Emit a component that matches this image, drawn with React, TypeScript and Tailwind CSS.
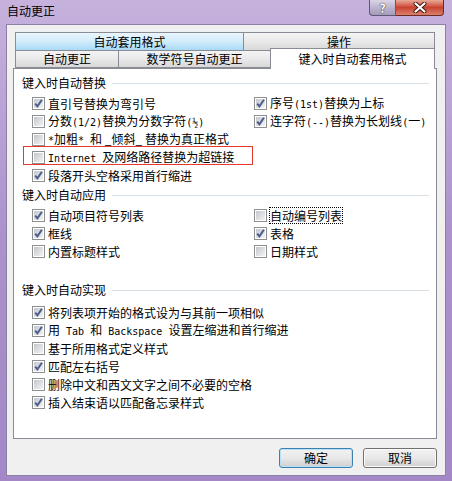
import React from "react";

const cjk = "font-['Noto_Sans_CJK_SC','Noto_Sans',sans-serif]";

// half-width latin runs, SimSun style (6px per char)
function M({ children }: { children: React.ReactNode }) {
  return <span className="whitespace-pre font-['DejaVu_Sans_Mono',monospace] text-[10px]">{children}</span>;
}

function CheckBox({ checked }: { checked?: boolean }) {
  return (
    <span className="relative flex h-[13px] w-[13px] shrink-0 border border-[#8e8f8f] bg-white p-px">
      <span className="block h-full w-full bg-gradient-to-br from-[#c3c7cd] to-[#f3f3f4]" />
      {checked && (
        <svg className="absolute left-0 top-0" width="11" height="11" viewBox="0 0 11 11">
          <path d="M2.2 5.6 L4.4 8.4 L8.9 1.8" fill="none" stroke="#4b5d8e" strokeWidth="2" />
        </svg>
      )}
    </span>
  );
}

function Item({ checked, children, focus }: { checked?: boolean; children: React.ReactNode; focus?: boolean }) {
  return (
    <div className="flex h-[18px] items-center gap-[3px]">
      <CheckBox checked={checked} />
      <span className={`whitespace-nowrap leading-[15px] ${focus ? "outline outline-1 outline-dotted outline-black" : ""}`}>{children}</span>
    </div>
  );
}

function Header({ title }: { title: string }) {
  return (
    <div className="flex h-[18px] items-center gap-[6px] pr-[7px]">
      <span>{title}</span>
      <span className="h-px flex-1 bg-[#d5dfe5]" />
    </div>
  );
}

function Tab({ label, className }: { label: string; className: string }) {
  return (
    <div className={`flex items-center justify-center border border-[#898c95] ${className}`}>
      {label}
    </div>
  );
}

export default function App() {
  return (
    <div className={`flex h-[481px] w-[452px] flex-col bg-gradient-to-b from-[#c6b2dd] via-[#ac91cd] to-[#a387c7] text-[12px] text-black ${cjk}`}>
      {/* title bar */}
      <div className="flex h-[24px] shrink-0 items-start">
        <span className="pl-[7px] pt-[3px] leading-[16px]">自动更正</span>
        <div className="ml-auto mr-[8px] flex">
          <div className="flex h-[16px] w-[27px] items-center justify-center rounded-bl-[4px] border border-t-0 border-[#5f5678] bg-gradient-to-b from-[#dcd5e6] via-[#bdb4cf] to-[#a39bb8] font-bold leading-none text-white [text-shadow:0_0_1px_#333,0_0_1px_#333]">
            ?
          </div>
          <div className="flex h-[16px] w-[48px] items-center justify-center rounded-br-[4px] border border-l-0 border-t-0 border-[#6b2a23] bg-gradient-to-b from-[#e9a897] via-[#c8422f] to-[#d9806c]">
            <svg width="14" height="11" viewBox="0 0 14 11">
              <path d="M2.5 1.5 L11.5 9.5 M11.5 1.5 L2.5 9.5" stroke="#3a1410" strokeWidth="4" strokeLinecap="round" />
              <path d="M2.5 1.5 L11.5 9.5 M11.5 1.5 L2.5 9.5" stroke="#ffffff" strokeWidth="2.2" strokeLinecap="round" />
            </svg>
          </div>
        </div>
      </div>

      {/* client area */}
      <div className="mx-[6px] flex h-[452px] flex-col border border-[#8d80a2] bg-[#f0f0f0] pl-[6px] pt-[7px]">
        <div className="ml-[2px] flex h-[19px] w-[420px]">
          <Tab label="自动套用格式" className="w-[229px] bg-gradient-to-b from-[#eaf6fd] via-[#d2ecfb] to-[#a8daf6]" />
          <Tab label="操作" className="-ml-px w-[192px] bg-gradient-to-b from-[#f4f4f4] via-[#e9e9e9] to-[#d8d8d8]" />
        </div>
        <div className="-mt-px ml-[2px] flex h-[18px] w-[420px] items-end">
          <Tab label="自动更正" className="h-[18px] w-[104px] bg-gradient-to-b from-[#f4f4f4] via-[#e9e9e9] to-[#d8d8d8]" />
          <Tab label="数学符号自动更正" className="-ml-px h-[18px] w-[153px] bg-gradient-to-b from-[#f4f4f4] via-[#e9e9e9] to-[#d8d8d8]" />
          <div className="relative z-10 -mb-px -ml-px flex h-[21px] w-[165px] items-start justify-center border border-b-0 border-[#898c95] bg-white pt-[1px]">
            键入时自动套用格式
          </div>
        </div>

        <div className="flex h-[371px] w-[424px] flex-col border border-[#898c95] bg-white pl-[8px] pt-[5px]">
          <Header title="键入时自动替换" />
          <div className="mt-[2px] grid grid-cols-[222px_1fr] pl-[10px]">
            <Item checked>直引号替换为弯引号</Item>
            <Item checked>序号<M>(1st)</M>替换为上标</Item>
            <Item>分数<M>(1/2)</M>替换为分数字符<M>(½)</M></Item>
            <Item checked>连字符<M>(--)</M>替换为长划线<M>(</M>一<M>)</M></Item>
            <div className="col-span-2">
              <Item><M>*</M>加粗<M>* </M>和 _倾斜_ 替换为真正格式</Item>
            </div>
            <div className="relative col-span-2">
              <Item>
                <M>Internet </M>及网络路径替换为超链接
              </Item>
              <span className="absolute -left-[9px] -top-[2px] h-[19px] w-[230px] border border-[#e8382e]" />
            </div>
            <div className="col-span-2">
              <Item checked>段落开头空格采用首行缩进</Item>
            </div>
          </div>

          <div className="mt-[2px]">
            <Header title="键入时自动应用" />
          </div>
          <div className="mt-[2px] grid grid-cols-[222px_1fr] pl-[10px]">
            <Item checked>自动项目符号列表</Item>
            <Item focus>自动编号列表</Item>
            <Item checked>框线</Item>
            <Item checked>表格</Item>
            <Item>内置标题样式</Item>
            <Item>日期样式</Item>
          </div>

          <div className="mt-[21px]">
            <Header title="键入时自动实现" />
          </div>
          <div className="mt-[4px] flex flex-col pl-[10px]">
            <Item checked>将列表项开始的格式设为与其前一项相似</Item>
            <Item checked>
              用<M> Tab </M>和<M> Backspace </M>设置左缩进和首行缩进
            </Item>
            <Item>基于所用格式定义样式</Item>
            <Item checked>匹配左右括号</Item>
            <Item>删除中文和西文文字之间不必要的空格</Item>
            <Item checked>插入结束语以匹配备忘录样式</Item>
          </div>
        </div>

        <div className="mt-[9px] flex justify-end gap-[10px] pr-[8px]">
          <button className="flex h-[20px] w-[74px] items-center justify-center rounded-[3px] border border-[#3c7fb1] bg-gradient-to-b from-[#f2f2f2] via-[#e8e8e8] to-[#cfcfcf] shadow-[inset_0_0_0_1px_#b8e1f8]">
            确定
          </button>
          <button className="flex h-[20px] w-[74px] items-center justify-center rounded-[3px] border border-[#707070] bg-gradient-to-b from-[#f2f2f2] via-[#e8e8e8] to-[#cfcfcf] shadow-[inset_0_0_0_1px_#fcfcfc]">
            取消
          </button>
        </div>
      </div>
    </div>
  );
}
